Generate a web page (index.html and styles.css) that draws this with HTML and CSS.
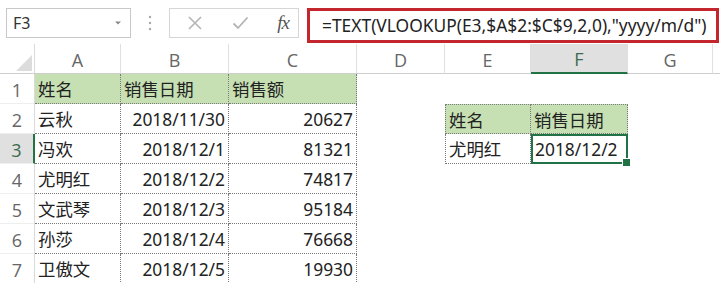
FILE: index.html
```html
<!DOCTYPE html>
<html lang="zh-CN">
<head>
  <meta charset="UTF-8">
  <title>销售日期查询</title>
  <link rel="stylesheet" href="styles.css">
</head>
<body>
  <div class="formula-bar">
    <div class="name-box">
      <span>F3</span>
      <svg class="drop" width="8" height="6" viewBox="0 0 8 6"><path d="M1 1.5h6L4 4.5z" fill="#8a8a8a"/></svg>
    </div>
    <div class="grip">
      <svg width="4" height="16" viewBox="0 0 4 16"><circle cx="2" cy="2" r="1.2" fill="#a8a8a8"/><circle cx="2" cy="8" r="1.2" fill="#a8a8a8"/><circle cx="2" cy="14" r="1.2" fill="#a8a8a8"/></svg>
    </div>
    <div class="fx-buttons">
      <svg width="16" height="16" viewBox="0 0 16 16"><path d="M2 2l12 12M14 2L2 14" stroke="#b4b4b4" stroke-width="1.6" fill="none"/></svg>
      <svg width="17" height="14" viewBox="0 0 17 14"><path d="M1.5 7.5l4.5 4.5L15.5 1.5" stroke="#b4b4b4" stroke-width="1.8" fill="none"/></svg>
      <span class="fx">fx</span>
    </div>
    <div class="formula">=TEXT(VLOOKUP(E3,$A$2:$C$9,2,0),"yyyy/m/d")</div>
  </div>

  <div class="sheet">
    <!-- column headers -->
    <div class="corner"><svg width="16" height="16" viewBox="0 0 16 16"><path d="M16 0V16H0z" fill="#dcdcdc"/></svg></div>
    <div class="ch">A</div>
    <div class="ch">B</div>
    <div class="ch">C</div>
    <div class="ch">D</div>
    <div class="ch">E</div>
    <div class="ch sel">F</div>
    <div class="ch">G</div>
    <div class="ch last"></div>

    <!-- row 1 -->
    <div class="rh">1</div>
    <div class="c t hd">姓名</div>
    <div class="c t hd">销售日期</div>
    <div class="c t hd">销售额</div>
    <div class="c"></div>
    <div class="c"></div>
    <div class="c"></div>
    <div class="c"></div>
    <div class="c"></div>

    <!-- row 2 -->
    <div class="rh">2</div>
    <div class="c t">云秋</div>
    <div class="c t num">2018/11/30</div>
    <div class="c t num">20627</div>
    <div class="c"></div>
    <div class="c t tl tt hd">姓名</div>
    <div class="c t tt hd">销售日期</div>
    <div class="c"></div>
    <div class="c"></div>

    <!-- row 3 -->
    <div class="rh sel">3</div>
    <div class="c t">冯欢</div>
    <div class="c t num">2018/12/1</div>
    <div class="c t num">81321</div>
    <div class="c"></div>
    <div class="c t tl">尤明红</div>
    <div class="c t active">2018/12/2</div>
    <div class="c"></div>
    <div class="c"></div>

    <!-- row 4 -->
    <div class="rh">4</div>
    <div class="c t">尤明红</div>
    <div class="c t num">2018/12/2</div>
    <div class="c t num">74817</div>
    <div class="c"></div>
    <div class="c"></div>
    <div class="c"></div>
    <div class="c"></div>
    <div class="c"></div>

    <!-- row 5 -->
    <div class="rh">5</div>
    <div class="c t">文武琴</div>
    <div class="c t num">2018/12/3</div>
    <div class="c t num">95184</div>
    <div class="c"></div>
    <div class="c"></div>
    <div class="c"></div>
    <div class="c"></div>
    <div class="c"></div>

    <!-- row 6 -->
    <div class="rh">6</div>
    <div class="c t">孙莎</div>
    <div class="c t num">2018/12/4</div>
    <div class="c t num">76668</div>
    <div class="c"></div>
    <div class="c"></div>
    <div class="c"></div>
    <div class="c"></div>
    <div class="c"></div>

    <!-- row 7 -->
    <div class="rh">7</div>
    <div class="c t">卫傲文</div>
    <div class="c t num">2018/12/5</div>
    <div class="c t num">19930</div>
    <div class="c"></div>
    <div class="c"></div>
    <div class="c"></div>
    <div class="c"></div>
    <div class="c"></div>
  </div>
</body>
</html>
```

FILE: styles.css
```css
* {
    box-sizing: border-box;
}

body {
    margin: 0;
    background-color: #ffffff;
    font-family: "Noto Sans", "Noto Sans CJK SC", sans-serif;
    color: #222222;
    overflow: hidden;
}

/* formula bar */
.formula-bar {
    display: flex;
    align-items: flex-start;
    height: 44px;
    padding-top: 8px;
}

.name-box {
    display: flex;
    align-items: center;
    justify-content: space-between;
    width: 125px;
    height: 30px;
    margin-left: 6px;
    padding: 0 8px 0 6px;
    border: 1px solid #c8c8c8;
    font-size: 16px;
    color: #333333;
}

.grip {
    display: flex;
    align-items: center;
    justify-content: center;
    width: 38px;
    height: 30px;
}

.fx-buttons {
    display: flex;
    align-items: center;
    justify-content: space-between;
    width: 130px;
    height: 30px;
    padding: 0 9px 0 17px;
    border: 1px solid #d6d6d6;
}

.fx {
    font-family: "Liberation Serif", "DejaVu Serif", serif;
    font-style: italic;
    font-size: 19px;
    color: #555555;
    letter-spacing: -1px;
}

.formula {
    width: 412px;
    height: 35px;
    margin-left: 8px;
    padding: 0 0 2px 12px;
    border: 3px solid #c3262d;
    display: flex;
    align-items: center;
    font-size: 17.4px;
    color: #222222;
    white-space: nowrap;
}

/* sheet grid */
.sheet {
    display: grid;
    grid-template-columns: 35px 86px 108px 128px 88px 86px 97px 85px 1fr;
    grid-template-rows: 30px repeat(7, 30px);
}

.corner {
    display: flex;
    align-items: flex-end;
    justify-content: flex-end;
    padding: 0 2px 2px 0;
    border-right: 1px solid #dadada;
    border-bottom: 1px solid #cfcfcf;
}

.ch {
    display: flex;
    align-items: flex-end;
    justify-content: center;
    padding-bottom: 1px;
    border-right: 1px solid #e0e0e0;
    border-bottom: 1px solid #cfcfcf;
    font-family: "Open Sans", sans-serif;
    font-size: 18px;
    color: #666666;
}

.ch.sel {
    background-color: #e0e0e0;
    border-bottom: 2px solid #217346;
    color: #3c6b50;
}

.ch.last {
    border-right: none;
}

.rh {
    display: flex;
    align-items: flex-end;
    justify-content: center;
    border-right: 1px solid #dadada;
    border-bottom: 1px solid #eeeeee;
    font-family: "Open Sans", sans-serif;
    font-size: 18px;
    line-height: 26px;
    color: #666666;
}

.rh.sel {
    background-color: #e0e0e0;
    border-right: 2px solid #217346;
    color: #3c6b50;
}

.c {
    display: flex;
    align-items: center;
    padding: 0 3px;
    font-size: 17.4px;
    white-space: nowrap;
}

.t {
    border-right: 1px dotted #7a7a7a;
    border-bottom: 1px dotted #7a7a7a;
}

.tl {
    border-left: 1px dotted #7a7a7a;
}

.tt {
    border-top: 1px dotted #7a7a7a;
}

.hd {
    background-color: #c6e0b4;
}

.num {
    justify-content: flex-end;
    padding-right: 3px;
}

.active {
    position: relative;
    border: 2px solid #217346;
    padding-left: 2px;
}

/* fill handle */
.active::after {
    content: "";
    position: absolute;
    right: -5px;
    bottom: -5px;
    width: 7px;
    height: 7px;
    background-color: #217346;
    border: 1px solid #ffffff;
}
```
